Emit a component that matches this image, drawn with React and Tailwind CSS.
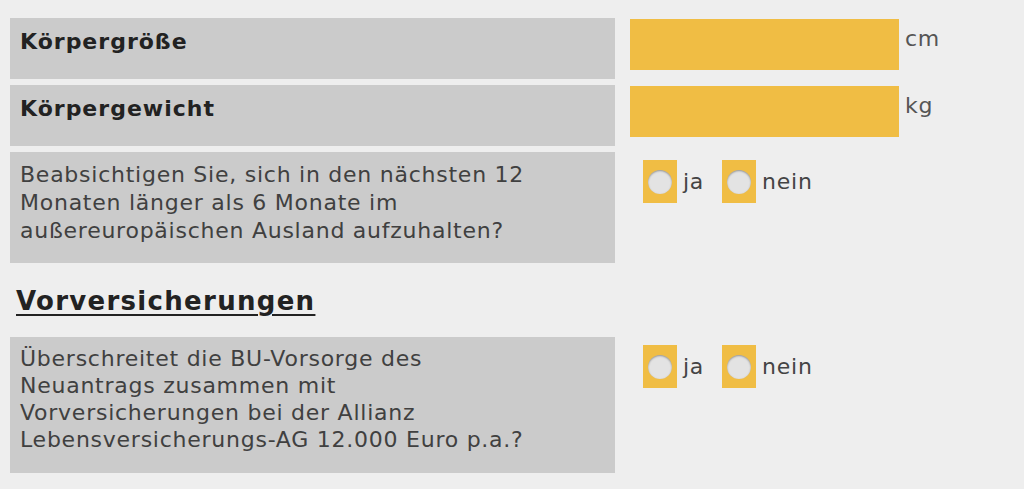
import React from 'react';

const font = { fontFamily: '"DejaVu Sans", Verdana, sans-serif' };

const Radio = ({ label }) => (
  <label className="flex items-center gap-[6px]">
    <span className="flex h-[43px] w-[34px] items-center justify-center bg-[#f0bd44]">
      <span className="h-[24px] w-[24px] rounded-full bg-[#e3e3e3] shadow-[inset_0_1px_2px_rgba(0,0,0,0.35)]" />
    </span>
    <span className="text-[22px] tracking-[0.75px] text-[#444]">{label}</span>
  </label>
);

const YesNo = () => (
  <div className="flex items-start gap-[18px] pl-[13px] pt-[8px]">
    <Radio label="ja" />
    <Radio label="nein" />
  </div>
);

const Row = ({ children, height, right }) => (
  <div className="flex gap-[15px]">
    <div className={`w-[605px] shrink-0 bg-[#cbcbcb] px-[10px] ${height}`}>{children}</div>
    <div className="flex-1">{right}</div>
  </div>
);

const MeasureInput = ({ unit }) => (
  <div className="flex items-start gap-[6px] pt-[1px]">
    <div className="h-[51px] w-[269px] bg-[#f0bd44]" />
    <span className="pt-[3px] text-[22px] tracking-[0.75px] text-[#555]">{unit}</span>
  </div>
);

const App = () => {
  return (
    <div className="h-[489px] w-[1024px] bg-[#eeeeee] pl-[10px] pt-[18px]" style={font}>
      <div className="flex flex-col gap-[6px]">
        <Row height="h-[61px]" right={<MeasureInput unit="cm" />}>
          <div className="pt-[7px] text-[22px] font-bold tracking-[1px] text-[#222]">Körpergröße</div>
        </Row>
        <Row height="h-[61px]" right={<MeasureInput unit="kg" />}>
          <div className="pt-[7px] text-[22px] font-bold tracking-[1px] text-[#222]">Körpergewicht</div>
        </Row>
        <Row height="h-[111px]" right={<YesNo />}>
          <p className="pt-[9px] text-[22px] leading-[28px] tracking-[0.75px] text-[#404040]">
            Beabsichtigen Sie, sich in den nächsten 12<br />
            Monaten länger als 6 Monate im<br />
            außereuropäischen Ausland aufzuhalten?
          </p>
        </Row>
      </div>

      <h2 className="mt-[22px] mb-[20px] pl-[6px] text-[26px] font-bold leading-[32px] tracking-[1.3px] text-[#222] underline decoration-2 underline-offset-[4px]">
        Vorversicherungen
      </h2>

      <Row height="h-[136px]" right={<YesNo />}>
        <p className="pt-[8px] text-[22px] leading-[27px] tracking-[0.75px] text-[#404040]">
          Überschreitet die BU-Vorsorge des<br />
          Neuantrags zusammen mit<br />
          Vorversicherungen bei der Allianz<br />
          Lebensversicherungs-AG 12.000 Euro p.a.?
        </p>
      </Row>
    </div>
  );
};

export default App;
